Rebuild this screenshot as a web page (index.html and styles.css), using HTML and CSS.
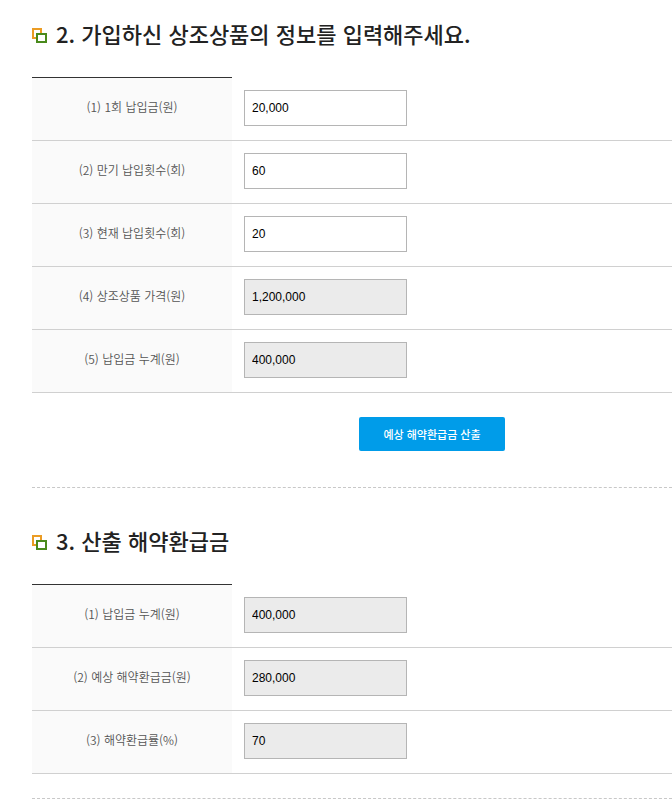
FILE: index.html
```
<!DOCTYPE html>
<html lang="ko">
<head>
    <meta charset="UTF-8">
    <meta name="viewport" content="width=device-width, initial-scale=1.0">
    <title>해약환급금 산출</title>
    <link rel="stylesheet" href="styles.css">
</head>
<body>

    <form id="refund-form" class="refund-form">
        <section class="section">
            <h2 class="section-title">
                <svg class="title-icon" width="15" height="15" viewBox="0 0 15 15" fill="none" stroke-width="2" aria-hidden="true">
                    <path d="M5 10H1V1H9V5" stroke="#eb9c24"/>
                    <rect x="5" y="6" width="9" height="8" stroke="#4a8a1c"/>
                </svg>
                2. 가입하신 상조상품의 정보를 입력해주세요.
            </h2>
            <table class="form-table">
                <tbody>
                    <tr>
                        <th scope="row"><label for="payment">(1) 1회 납입금(원)</label></th>
                        <td><input type="text" id="payment" name="payment" value="20,000"></td>
                    </tr>
                    <tr>
                        <th scope="row"><label for="totalCount">(2) 만기 납입횟수(회)</label></th>
                        <td><input type="text" id="totalCount" name="totalCount" value="60"></td>
                    </tr>
                    <tr>
                        <th scope="row"><label for="currentCount">(3) 현재 납입횟수(회)</label></th>
                        <td><input type="text" id="currentCount" name="currentCount" value="20"></td>
                    </tr>
                    <tr>
                        <th scope="row"><label for="price">(4) 상조상품 가격(원)</label></th>
                        <td><input type="text" id="price" name="price" value="1,200,000" readonly></td>
                    </tr>
                    <tr>
                        <th scope="row"><label for="paidTotal">(5) 납입금 누계(원)</label></th>
                        <td><input type="text" id="paidTotal" name="paidTotal" value="400,000" readonly></td>
                    </tr>
                </tbody>
            </table>
            <div class="actions">
                <button type="button" class="submit-button">예상 해약환급금 산출</button>
            </div>
        </section>

        <section class="section">
            <h2 class="section-title">
                <svg class="title-icon" width="15" height="15" viewBox="0 0 15 15" fill="none" stroke-width="2" aria-hidden="true">
                    <path d="M5 10H1V1H9V5" stroke="#eb9c24"/>
                    <rect x="5" y="6" width="9" height="8" stroke="#4a8a1c"/>
                </svg>
                3. 산출 해약환급금
            </h2>
            <table class="form-table">
                <tbody>
                    <tr>
                        <th scope="row"><label for="resultPaid">(1) 납입금 누계(원)</label></th>
                        <td><input type="text" id="resultPaid" name="resultPaid" value="400,000" readonly></td>
                    </tr>
                    <tr>
                        <th scope="row"><label for="resultRefund">(2) 예상 해약환급금(원)</label></th>
                        <td><input type="text" id="resultRefund" name="resultRefund" value="280,000" readonly></td>
                    </tr>
                    <tr>
                        <th scope="row"><label for="resultRate">(3) 해약환급률(%)</label></th>
                        <td><input type="text" id="resultRate" name="resultRate" value="70" readonly></td>
                    </tr>
                </tbody>
            </table>
        </section>
    </form>

</body>
</html>
```
FILE: styles.css
```
*, *::before, *::after {
    box-sizing: border-box;
    margin: 0;
    padding: 0;
}

body {
    font-family: "Noto Sans CJK KR", sans-serif;
    font-size: 12px;
    color: #555;
    background-color: #fff;
}

.refund-form {
    padding-left: 32px;
}

.section {
    padding: 38px 0 24px;
    border-bottom: 1px dashed #c8c8c8;
}

.section:first-child {
    padding-top: 19px;
    padding-bottom: 36px;
}

.section-title {
    display: flex;
    align-items: center;
    gap: 9px;
    margin-bottom: 30px;
    color: #222;
    font-size: 22px;
    font-weight: 500;
    line-height: 28px;
}

.title-icon {
    flex: none;
    margin-top: 4px;
}

.form-table {
    width: 100%;
    border-collapse: separate;
    border-spacing: 0;
}

.form-table th,
.form-table td {
    border-bottom: 1px solid #d0d0d0;
}

.form-table th {
    width: 200px;
    padding-bottom: 4px;
    background-color: #fafafa;
    font-weight: 350;
    line-height: 18px;
    text-align: center;
}

.form-table td {
    padding: 12px 12px 14px;
}

/* dark line only over the label column */
.form-table tr:first-child th {
    border-top: 1px solid #333;
}

.form-table tr:first-child td {
    border-top: 1px solid transparent;
}

.form-table input {
    display: block;
    width: 163px;
    height: 36px;
    padding: 0 7px;
    border: 1px solid #b5b5b5;
    background-color: #fff;
    color: #000;
    font-family: "Liberation Sans", Arial, sans-serif;
    font-size: 12px;
}

.form-table input:read-only {
    background-color: #ebebeb;
}

.actions {
    display: flex;
    justify-content: center;
    padding: 24px 0 0 160px;
}

.submit-button {
    height: 34px;
    padding: 0 24px;
    border: none;
    border-radius: 2px;
    background-color: #009ce9;
    color: #fff;
    font-family: inherit;
    font-size: 11px;
    font-weight: 500;
    cursor: pointer;
}
```
